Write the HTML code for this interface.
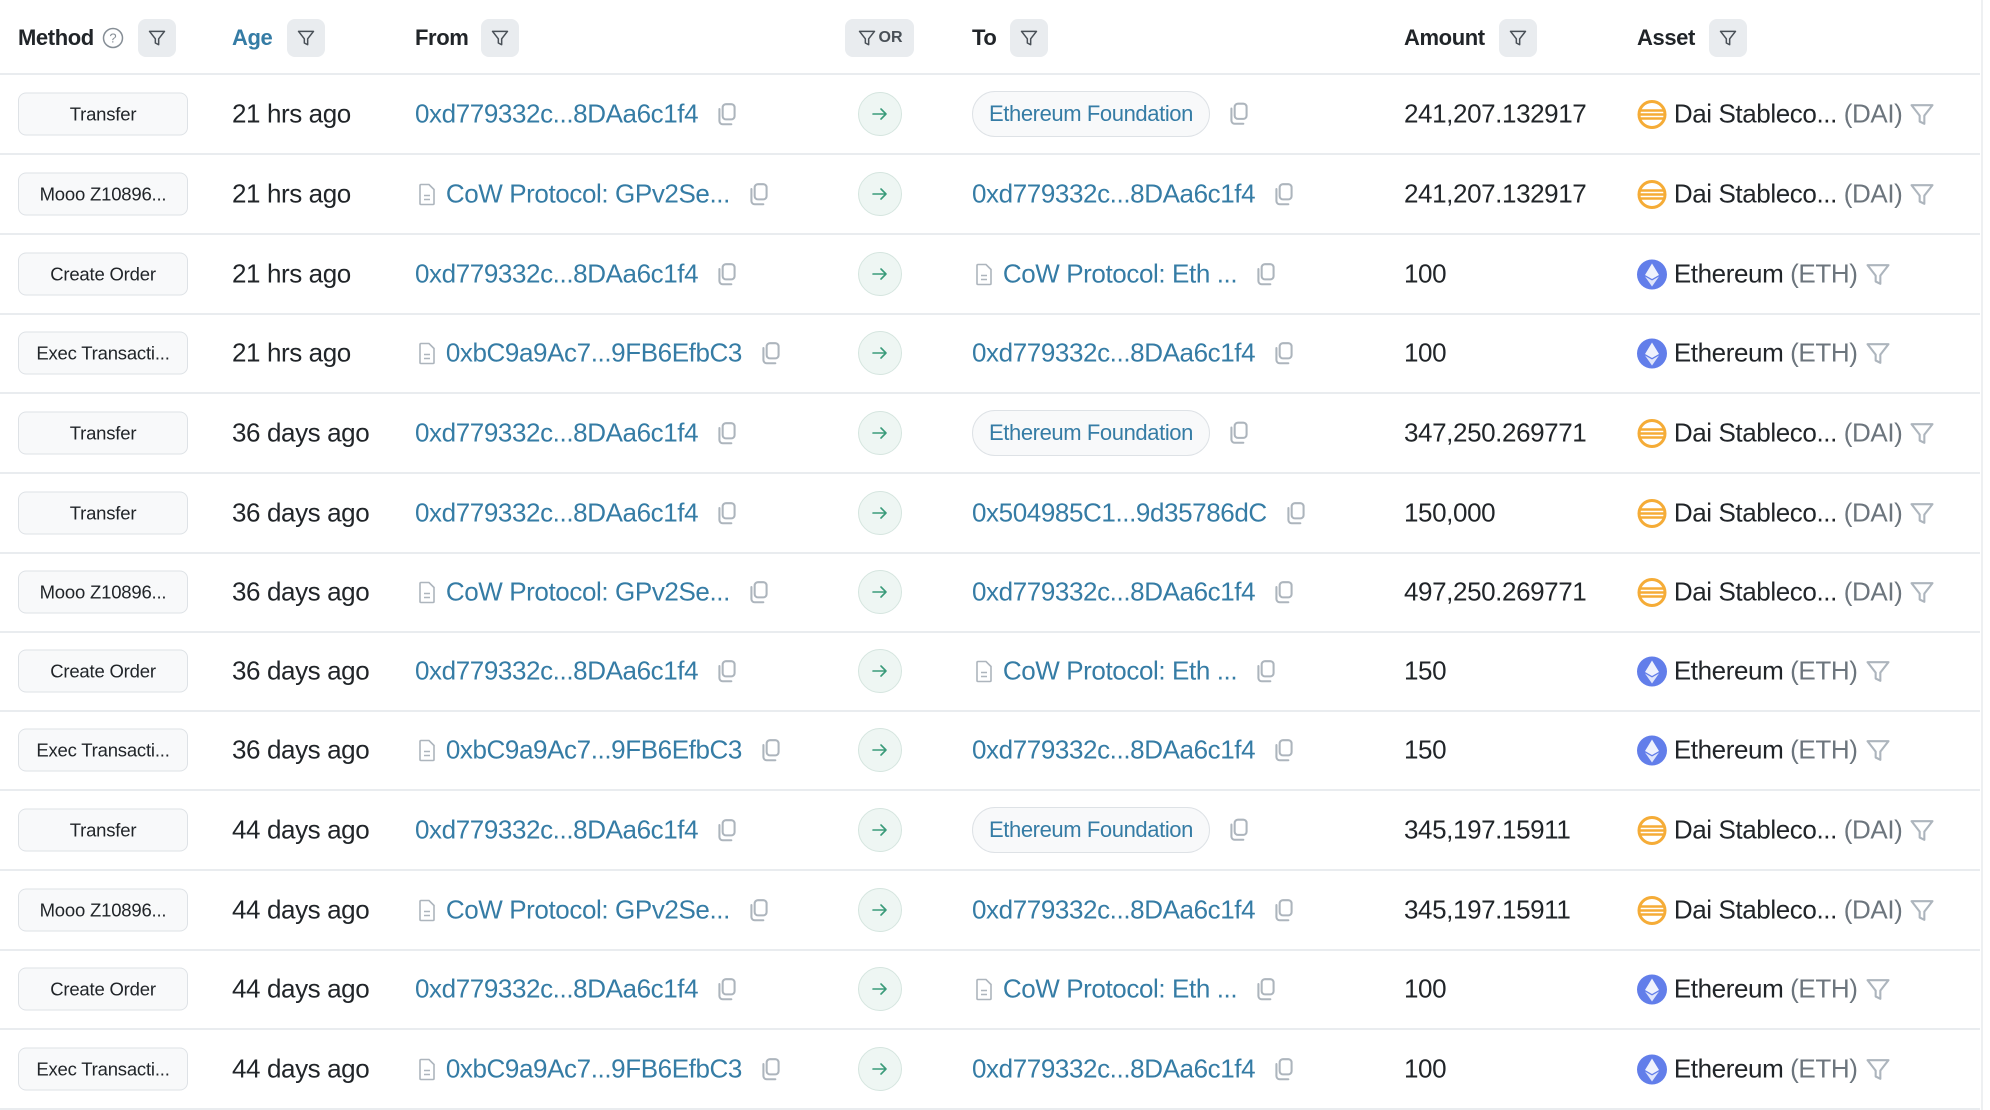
<!DOCTYPE html>
<html><head><meta charset="utf-8"><style>
*{box-sizing:border-box;margin:0;padding:0}
body{width:1990px;height:1110px;background:#fff;font-family:"Liberation Sans",sans-serif;color:#212529;position:relative;overflow:hidden}
.hdr{position:absolute;left:0;top:0;width:1980px;height:75px;border-bottom:2px solid #e9ecef}
.h{position:absolute;top:38px;transform:translateY(-50%);font-weight:bold;font-size:22px;letter-spacing:-0.4px}
.fb{position:absolute;top:19px;width:38px;height:38px;background:#e9ecef;border-radius:8px;display:flex;align-items:center;justify-content:center}
.row{position:absolute;left:0;width:1980px;height:80px;border-bottom:2px solid #e9ecef}
.c{position:absolute;top:50%;transform:translateY(-50%);display:flex;align-items:center;font-size:26px;white-space:nowrap;letter-spacing:-0.4px}
.badge{left:18px;width:170px;height:43px;border:1.5px solid #dee2e6;background:#f8f9fa;border-radius:8px;justify-content:center;font-size:18.5px;letter-spacing:-0.2px}
.lnk{color:#357ca5}
.cp{margin-left:16px;display:inline-block}
.arr{left:858px;width:44px;height:44px;border-radius:50%;background:#eef6f3;border:1.5px solid #d5e5df;justify-content:center}
.pill{border:1.5px solid #dee2e6;background:#f8f9fa;border-radius:24px;height:46px;padding:0 16px;font-size:22px}
.dai{color:#6c757d}
.side{position:absolute;left:1981px;top:0;width:2px;height:1110px;background:#eef0f2}
</style></head><body>
<svg width="0" height="0" style="position:absolute"><defs>
<symbol id="copy" viewBox="0 0 24 24"><rect x="8" y="2.5" width="11" height="14" rx="3" fill="none" stroke="#adb5bd" stroke-width="1.9"/><path d="M5 7v11a3 3 0 0 0 3 3h8" fill="none" stroke="#adb5bd" stroke-width="1.9" stroke-linecap="round"/></symbol>
<symbol id="doc" viewBox="0 0 24 24"><path d="M6 2h8l5 5v14a1 1 0 0 1-1 1H6a1 1 0 0 1-1-1V3a1 1 0 0 1 1-1z" fill="none" stroke="#adb5bd" stroke-width="1.6"/><path d="M9 13h6M9 17h6" stroke="#adb5bd" stroke-width="1.6"/></symbol>
<symbol id="filt" viewBox="0 0 24 24"><path d="M3 4h18l-7 9v7l-4-2v-5z" fill="none" stroke="currentColor" stroke-width="1.8" stroke-linejoin="round"/></symbol>
<symbol id="daii" viewBox="0 0 30 30"><circle cx="15" cy="15" r="13" fill="#fff" stroke="#f5ac37" stroke-width="3"/><path d="M3 11h24M2 15h26M3 19h24" stroke="#f5ac37" stroke-width="2.5"/></symbol>
<symbol id="ethi" viewBox="0 0 30 30"><circle cx="15" cy="15" r="15" fill="#627eea"/><path d="M15 4l7 11.5-7 4-7-4z" fill="#fff" opacity=".9"/><path d="M15 21l7-4-7 10-7-10z" fill="#dfe5fb"/></symbol>
<symbol id="ar" viewBox="0 0 20 20"><path d="M3 10h13M11 5l5 5-5 5" fill="none" stroke="#3a9b7a" stroke-width="1.6" stroke-linecap="round" stroke-linejoin="round"/></symbol>
</defs></svg>

<div class="hdr">
<div class="h" style="left:18px">Method</div>
<svg style="position:absolute;left:102px;top:27px" width="22" height="22" viewBox="0 0 22 22"><circle cx="11" cy="11" r="9.5" fill="none" stroke="#868e96" stroke-width="1.5"/><text x="11" y="15.5" text-anchor="middle" font-size="13" fill="#868e96" font-family="Liberation Sans">?</text></svg>
<div class="fb" style="left:138px"><svg width="20" height="20" style="color:#495057"><use href="#filt"/></svg></div>
<div class="h" style="left:232px;color:#357ca5">Age</div>
<div class="fb" style="left:287px"><svg width="20" height="20" style="color:#495057"><use href="#filt"/></svg></div>
<div class="h" style="left:415px">From</div>
<div class="fb" style="left:481px"><svg width="20" height="20" style="color:#495057"><use href="#filt"/></svg></div>
<div class="fb" style="left:845px;width:69px"><svg width="20" height="20" style="color:#495057"><use href="#filt"/></svg><span style="font-size:16px;font-weight:bold;color:#495057;margin-left:2px">OR</span></div>
<div class="h" style="left:972px">To</div>
<div class="fb" style="left:1010px"><svg width="20" height="20" style="color:#495057"><use href="#filt"/></svg></div>
<div class="h" style="left:1404px">Amount</div>
<div class="fb" style="left:1499px"><svg width="20" height="20" style="color:#495057"><use href="#filt"/></svg></div>
<div class="h" style="left:1637px">Asset</div>
<div class="fb" style="left:1709px"><svg width="20" height="20" style="color:#495057"><use href="#filt"/></svg></div>
</div>

<div class="side"></div>

<div class="row" style="top:75px"><div class="c badge">Transfer</div><div class="c" style="left:232px">21 hrs ago</div><div class="c lnk" style="left:415px">0xd779332c...8DAa6c1f4<svg class="cp" width="26" height="26"><use href="#copy"/></svg></div><div class="c arr"><svg width="20" height="20"><use href="#ar"/></svg></div><div class="c" style="left:972px"><span class="pill c lnk" style="position:static;transform:none">Ethereum Foundation</span><svg class="cp" width="26" height="26"><use href="#copy"/></svg></div><div class="c" style="left:1404px">241,207.132917</div><div class="c" style="left:1637px"><svg width="30" height="30"><use href="#daii"/></svg>&nbsp;Dai Stableco...&nbsp;<span class="dai">(DAI)</span><svg width="28" height="28" style="margin-left:6px;color:#adb5bd"><use href="#filt"/></svg></div></div>

<div class="row" style="top:155px"><div class="c badge">Mooo Z10896...</div><div class="c" style="left:232px">21 hrs ago</div><div class="c lnk" style="left:415px"><svg width="24" height="24"><use href="#doc"/></svg>&nbsp;CoW Protocol: GPv2Se...<svg class="cp" width="26" height="26"><use href="#copy"/></svg></div><div class="c arr"><svg width="20" height="20"><use href="#ar"/></svg></div><div class="c lnk" style="left:972px">0xd779332c...8DAa6c1f4<svg class="cp" width="26" height="26"><use href="#copy"/></svg></div><div class="c" style="left:1404px">241,207.132917</div><div class="c" style="left:1637px"><svg width="30" height="30"><use href="#daii"/></svg>&nbsp;Dai Stableco...&nbsp;<span class="dai">(DAI)</span><svg width="28" height="28" style="margin-left:6px;color:#adb5bd"><use href="#filt"/></svg></div></div>

<div class="row" style="top:235px"><div class="c badge">Create Order</div><div class="c" style="left:232px">21 hrs ago</div><div class="c lnk" style="left:415px">0xd779332c...8DAa6c1f4<svg class="cp" width="26" height="26"><use href="#copy"/></svg></div><div class="c arr"><svg width="20" height="20"><use href="#ar"/></svg></div><div class="c lnk" style="left:972px"><svg width="24" height="24"><use href="#doc"/></svg>&nbsp;CoW Protocol: Eth ...<svg class="cp" width="26" height="26"><use href="#copy"/></svg></div><div class="c" style="left:1404px">100</div><div class="c" style="left:1637px"><svg width="30" height="30"><use href="#ethi"/></svg>&nbsp;Ethereum&nbsp;<span class="dai">(ETH)</span><svg width="28" height="28" style="margin-left:6px;color:#adb5bd"><use href="#filt"/></svg></div></div>

<div class="row" style="top:314px"><div class="c badge">Exec Transacti...</div><div class="c" style="left:232px">21 hrs ago</div><div class="c lnk" style="left:415px"><svg width="24" height="24"><use href="#doc"/></svg>&nbsp;0xbC9a9Ac7...9FB6EfbC3<svg class="cp" width="26" height="26"><use href="#copy"/></svg></div><div class="c arr"><svg width="20" height="20"><use href="#ar"/></svg></div><div class="c lnk" style="left:972px">0xd779332c...8DAa6c1f4<svg class="cp" width="26" height="26"><use href="#copy"/></svg></div><div class="c" style="left:1404px">100</div><div class="c" style="left:1637px"><svg width="30" height="30"><use href="#ethi"/></svg>&nbsp;Ethereum&nbsp;<span class="dai">(ETH)</span><svg width="28" height="28" style="margin-left:6px;color:#adb5bd"><use href="#filt"/></svg></div></div>

<div class="row" style="top:394px"><div class="c badge">Transfer</div><div class="c" style="left:232px">36 days ago</div><div class="c lnk" style="left:415px">0xd779332c...8DAa6c1f4<svg class="cp" width="26" height="26"><use href="#copy"/></svg></div><div class="c arr"><svg width="20" height="20"><use href="#ar"/></svg></div><div class="c" style="left:972px"><span class="pill c lnk" style="position:static;transform:none">Ethereum Foundation</span><svg class="cp" width="26" height="26"><use href="#copy"/></svg></div><div class="c" style="left:1404px">347,250.269771</div><div class="c" style="left:1637px"><svg width="30" height="30"><use href="#daii"/></svg>&nbsp;Dai Stableco...&nbsp;<span class="dai">(DAI)</span><svg width="28" height="28" style="margin-left:6px;color:#adb5bd"><use href="#filt"/></svg></div></div>

<div class="row" style="top:474px"><div class="c badge">Transfer</div><div class="c" style="left:232px">36 days ago</div><div class="c lnk" style="left:415px">0xd779332c...8DAa6c1f4<svg class="cp" width="26" height="26"><use href="#copy"/></svg></div><div class="c arr"><svg width="20" height="20"><use href="#ar"/></svg></div><div class="c lnk" style="left:972px">0x504985C1...9d35786dC<svg class="cp" width="26" height="26"><use href="#copy"/></svg></div><div class="c" style="left:1404px">150,000</div><div class="c" style="left:1637px"><svg width="30" height="30"><use href="#daii"/></svg>&nbsp;Dai Stableco...&nbsp;<span class="dai">(DAI)</span><svg width="28" height="28" style="margin-left:6px;color:#adb5bd"><use href="#filt"/></svg></div></div>

<div class="row" style="top:553px"><div class="c badge">Mooo Z10896...</div><div class="c" style="left:232px">36 days ago</div><div class="c lnk" style="left:415px"><svg width="24" height="24"><use href="#doc"/></svg>&nbsp;CoW Protocol: GPv2Se...<svg class="cp" width="26" height="26"><use href="#copy"/></svg></div><div class="c arr"><svg width="20" height="20"><use href="#ar"/></svg></div><div class="c lnk" style="left:972px">0xd779332c...8DAa6c1f4<svg class="cp" width="26" height="26"><use href="#copy"/></svg></div><div class="c" style="left:1404px">497,250.269771</div><div class="c" style="left:1637px"><svg width="30" height="30"><use href="#daii"/></svg>&nbsp;Dai Stableco...&nbsp;<span class="dai">(DAI)</span><svg width="28" height="28" style="margin-left:6px;color:#adb5bd"><use href="#filt"/></svg></div></div>

<div class="row" style="top:632px"><div class="c badge">Create Order</div><div class="c" style="left:232px">36 days ago</div><div class="c lnk" style="left:415px">0xd779332c...8DAa6c1f4<svg class="cp" width="26" height="26"><use href="#copy"/></svg></div><div class="c arr"><svg width="20" height="20"><use href="#ar"/></svg></div><div class="c lnk" style="left:972px"><svg width="24" height="24"><use href="#doc"/></svg>&nbsp;CoW Protocol: Eth ...<svg class="cp" width="26" height="26"><use href="#copy"/></svg></div><div class="c" style="left:1404px">150</div><div class="c" style="left:1637px"><svg width="30" height="30"><use href="#ethi"/></svg>&nbsp;Ethereum&nbsp;<span class="dai">(ETH)</span><svg width="28" height="28" style="margin-left:6px;color:#adb5bd"><use href="#filt"/></svg></div></div>

<div class="row" style="top:711px"><div class="c badge">Exec Transacti...</div><div class="c" style="left:232px">36 days ago</div><div class="c lnk" style="left:415px"><svg width="24" height="24"><use href="#doc"/></svg>&nbsp;0xbC9a9Ac7...9FB6EfbC3<svg class="cp" width="26" height="26"><use href="#copy"/></svg></div><div class="c arr"><svg width="20" height="20"><use href="#ar"/></svg></div><div class="c lnk" style="left:972px">0xd779332c...8DAa6c1f4<svg class="cp" width="26" height="26"><use href="#copy"/></svg></div><div class="c" style="left:1404px">150</div><div class="c" style="left:1637px"><svg width="30" height="30"><use href="#ethi"/></svg>&nbsp;Ethereum&nbsp;<span class="dai">(ETH)</span><svg width="28" height="28" style="margin-left:6px;color:#adb5bd"><use href="#filt"/></svg></div></div>

<div class="row" style="top:791px"><div class="c badge">Transfer</div><div class="c" style="left:232px">44 days ago</div><div class="c lnk" style="left:415px">0xd779332c...8DAa6c1f4<svg class="cp" width="26" height="26"><use href="#copy"/></svg></div><div class="c arr"><svg width="20" height="20"><use href="#ar"/></svg></div><div class="c" style="left:972px"><span class="pill c lnk" style="position:static;transform:none">Ethereum Foundation</span><svg class="cp" width="26" height="26"><use href="#copy"/></svg></div><div class="c" style="left:1404px">345,197.15911</div><div class="c" style="left:1637px"><svg width="30" height="30"><use href="#daii"/></svg>&nbsp;Dai Stableco...&nbsp;<span class="dai">(DAI)</span><svg width="28" height="28" style="margin-left:6px;color:#adb5bd"><use href="#filt"/></svg></div></div>

<div class="row" style="top:871px"><div class="c badge">Mooo Z10896...</div><div class="c" style="left:232px">44 days ago</div><div class="c lnk" style="left:415px"><svg width="24" height="24"><use href="#doc"/></svg>&nbsp;CoW Protocol: GPv2Se...<svg class="cp" width="26" height="26"><use href="#copy"/></svg></div><div class="c arr"><svg width="20" height="20"><use href="#ar"/></svg></div><div class="c lnk" style="left:972px">0xd779332c...8DAa6c1f4<svg class="cp" width="26" height="26"><use href="#copy"/></svg></div><div class="c" style="left:1404px">345,197.15911</div><div class="c" style="left:1637px"><svg width="30" height="30"><use href="#daii"/></svg>&nbsp;Dai Stableco...&nbsp;<span class="dai">(DAI)</span><svg width="28" height="28" style="margin-left:6px;color:#adb5bd"><use href="#filt"/></svg></div></div>

<div class="row" style="top:950px"><div class="c badge">Create Order</div><div class="c" style="left:232px">44 days ago</div><div class="c lnk" style="left:415px">0xd779332c...8DAa6c1f4<svg class="cp" width="26" height="26"><use href="#copy"/></svg></div><div class="c arr"><svg width="20" height="20"><use href="#ar"/></svg></div><div class="c lnk" style="left:972px"><svg width="24" height="24"><use href="#doc"/></svg>&nbsp;CoW Protocol: Eth ...<svg class="cp" width="26" height="26"><use href="#copy"/></svg></div><div class="c" style="left:1404px">100</div><div class="c" style="left:1637px"><svg width="30" height="30"><use href="#ethi"/></svg>&nbsp;Ethereum&nbsp;<span class="dai">(ETH)</span><svg width="28" height="28" style="margin-left:6px;color:#adb5bd"><use href="#filt"/></svg></div></div>

<div class="row" style="top:1030px"><div class="c badge">Exec Transacti...</div><div class="c" style="left:232px">44 days ago</div><div class="c lnk" style="left:415px"><svg width="24" height="24"><use href="#doc"/></svg>&nbsp;0xbC9a9Ac7...9FB6EfbC3<svg class="cp" width="26" height="26"><use href="#copy"/></svg></div><div class="c arr"><svg width="20" height="20"><use href="#ar"/></svg></div><div class="c lnk" style="left:972px">0xd779332c...8DAa6c1f4<svg class="cp" width="26" height="26"><use href="#copy"/></svg></div><div class="c" style="left:1404px">100</div><div class="c" style="left:1637px"><svg width="30" height="30"><use href="#ethi"/></svg>&nbsp;Ethereum&nbsp;<span class="dai">(ETH)</span><svg width="28" height="28" style="margin-left:6px;color:#adb5bd"><use href="#filt"/></svg></div></div>
</body></html>
